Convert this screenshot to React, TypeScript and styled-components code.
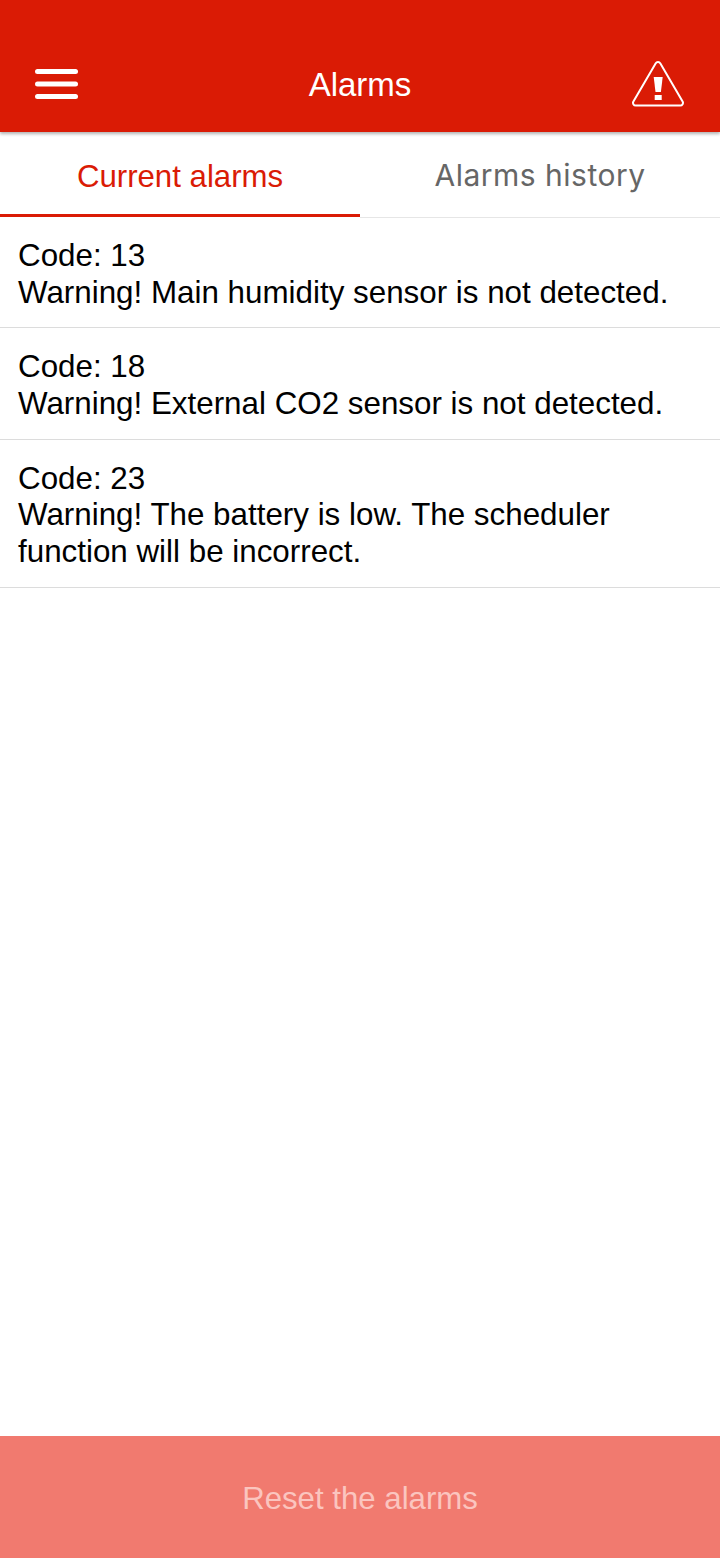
import React from "react";
import styled, { createGlobalStyle } from "styled-components";

const Global = createGlobalStyle`
  html, body { margin: 0; padding: 0; background: #fff; }
  body { font-family: "Liberation Sans", Arial, sans-serif; }
`;

const Screen = styled.div`
  width: 720px;
  height: 1558px;
  display: flex;
  flex-direction: column;
  background: #fff;
  overflow: hidden;
`;

const Header = styled.header`
  height: 132px;
  flex: none;
  box-sizing: border-box;
  padding: 36px 36px 0 35px;
  display: grid;
  grid-template-columns: 1fr auto 1fr;
  align-items: center;
  background: #da1b05;
  box-shadow: 0 2px 3px rgba(0, 0, 0, 0.3);
  position: relative;
  z-index: 1;
`;

const HeaderLeft = styled.div`
  display: flex;
  justify-content: flex-start;
`;

const HeaderRight = styled.div`
  display: flex;
  justify-content: flex-end;
`;

const HeaderTitle = styled.h1`
  margin: 0 0 0 1px;
  padding-top: 2px;
  font-size: 33px;
  font-weight: 400;
  color: #fff;
`;

const Tabs = styled.nav`
  height: 85px;
  flex: none;
  display: flex;
`;

const ActiveTab = styled.div`
  flex: 1;
  box-sizing: border-box;
  display: flex;
  align-items: center;
  justify-content: center;
  padding-top: 8px;
  font-size: 31.2px;
  color: #da1b05;
  border-bottom: 3px solid #da1b05;
`;

const IdleTab = styled.div`
  flex: 1;
  box-sizing: border-box;
  display: flex;
  align-items: center;
  justify-content: center;
  padding-top: 1px;
  font-family: Inter, "Liberation Sans", sans-serif;
  font-size: 30px;
  letter-spacing: 0.5px;
  color: #666;
  box-shadow: 0 1px 0 #e6e6e6;
`;

const List = styled.ul`
  flex: 1;
  margin: 0;
  padding: 0;
  list-style: none;
`;

const Row = styled.li`
  box-sizing: border-box;
  padding: 21px 18px 16px;
  border-bottom: 1px solid #dcdcdc;
  font-size: 31.35px;
  line-height: 36.67px;
  color: #000;
`;

const ResetButton = styled.button`
  height: 122px;
  flex: none;
  border: 0;
  padding: 3px 0 0;
  background: #f17a6f;
  color: #fbc5bf;
  font-family: inherit;
  font-size: 31.2px;
`;

const alarms = [
  { code: 13, text: "Warning! Main humidity sensor is not detected." },
  { code: 18, text: "Warning! External CO2 sensor is not detected." },
  { code: 23, text: "Warning! The battery is low. The scheduler function will be incorrect." },
];

const MenuIcon = () => (
  <svg width="44" height="30" viewBox="0 0 44 30" fill="#fff">
    <rect x="0" y="0" width="43" height="5" rx="2.5" />
    <rect x="0" y="12.5" width="43" height="5" rx="2.5" />
    <rect x="0" y="25" width="43" height="5" rx="2.5" />
  </svg>
);

const WarningIcon = () => (
  <svg width="52" height="46" viewBox="0 0 52 46" fill="none">
    <path
      d="M23.6 2.4a2.8 2.8 0 0 1 4.8 0L50.6 40.4a2.8 2.8 0 0 1-2.4 4.2H3.8a2.8 2.8 0 0 1-2.4-4.2Z"
      stroke="#fff"
      strokeWidth="2"
      strokeLinejoin="round"
    />
    <path d="M21.7 16h9l-1.800 15h-5.400z" fill="#fff" />
    <rect x="22.700" y="34" width="7" height="5" fill="#fff" />
  </svg>
);

export default function App() {
  return (
    <Screen>
      <Global />
      <Header>
        <HeaderLeft>
          <MenuIcon />
        </HeaderLeft>
        <HeaderTitle>Alarms</HeaderTitle>
        <HeaderRight>
          <WarningIcon />
        </HeaderRight>
      </Header>
      <Tabs>
        <ActiveTab>Current alarms</ActiveTab>
        <IdleTab>Alarms history</IdleTab>
      </Tabs>
      <List>
        {alarms.map((a) => (
          <Row key={a.code}>
            Code: {a.code}
            <br />
            {a.text}
          </Row>
        ))}
      </List>
      <ResetButton>Reset the alarms</ResetButton>
    </Screen>
  );
}
